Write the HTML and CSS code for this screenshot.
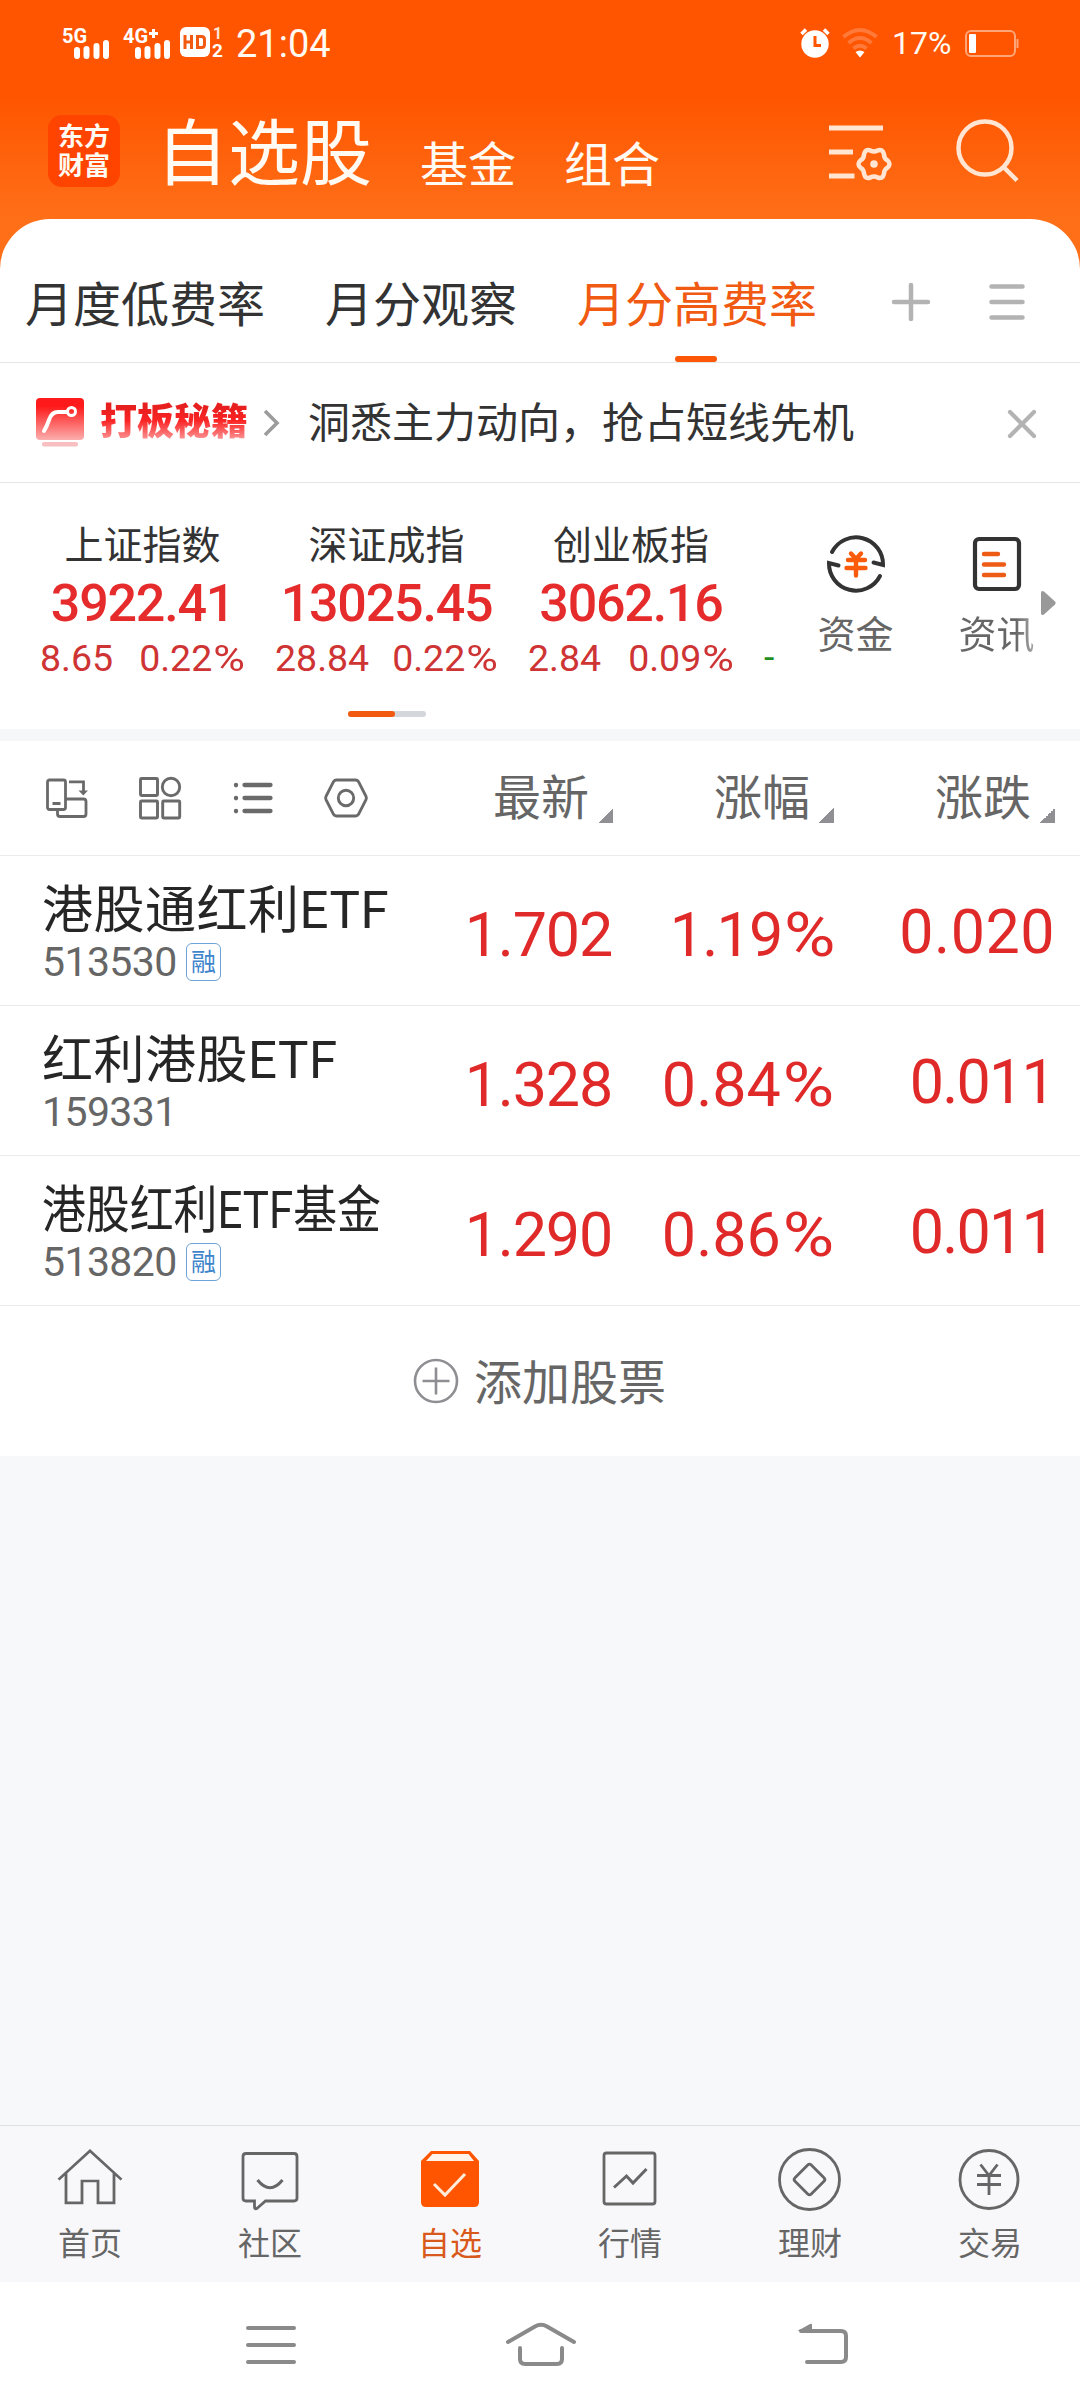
FILE: index.html
```html
<!DOCTYPE html>
<html lang="zh-CN">
<head>
<meta charset="utf-8">
<title>自选股</title>
<link rel="stylesheet" href="styles.css">
</head>
<body>
<div class="screen">
  <header class="top">
    <div class="status">
      <svg class="signal" width="49" height="34" viewBox="0 0 49 34"><text x="0" y="17" class="net">5G</text><path class="bars" d="M15 24v6M24.500 23v7M34.500 20v10M44 17v13"/></svg>
      <svg class="signal-4g" width="49" height="34" viewBox="0 0 49 34"><text x="0" y="17" class="net">4G</text><path d="M26 7.500h9M30.500 3v9" stroke="#fff" stroke-width="3"/><path class="bars" d="M15 24v6M24.500 23v7M34.500 20v10M44 17v13"/></svg>
      <svg class="hd" width="44" height="34" viewBox="0 0 44 34"><rect x="0" y="2" width="30" height="30" rx="6" fill="#fff"/><path d="M5 10v14M11.500 10v14M5 17h6.500M17.500 11.500v11h4q3 0 3-3v-5q0-3-3-3z" fill="none" stroke="#f25a12" stroke-width="3"/><text x="33" y="14" class="sim">1</text><text x="32" y="32" class="sim sim-on">2</text></svg>
      <span class="clock">21:04</span>
      <svg class="alarm" width="30" height="30" viewBox="0 0 30 30"><circle cx="15" cy="16" r="13.700" fill="#fff"/><path d="M1.500 6l4.500-4.500M28.500 6L24 1.500" stroke="#fff" stroke-width="3.500"/><path d="M15 8v9.500h6" fill="none" stroke="#ff5500" stroke-width="3"/></svg>
      <svg class="wifi" width="36" height="30" viewBox="0 0 36 30"><g fill="none" stroke="#ff7a3a" stroke-width="4"><path d="M1.500 9q16.500-14 33 0"/><path d="M6.500 15q11.500-10 23 0"/><path d="M11.500 20.500q6.500-5.500 13 0"/></g><path d="M13.500 24q4.500-3 9 0L18 29.500z" fill="#fff"/></svg>
      <span class="percent">17%</span>
      <svg class="battery" width="54" height="28" viewBox="0 0 54 28"><rect x="1" y="1" width="49" height="25" rx="5" fill="none" stroke="#ffa679" stroke-width="2"/><rect x="4" y="4" width="7" height="19" rx="1" fill="#fff"/><path d="M52.500 9v9" stroke="#ffa679" stroke-width="2"/></svg>
    </div>
    <div class="titlebar">
      <div class="logo"><span>东方</span><span>财富</span></div>
      <h1 class="title">自选股</h1>
      <span class="section">基金</span>
      <span class="section">组合</span>
      <svg class="manage" width="64" height="58" viewBox="0 0 64 58"><g fill="none" stroke="#ffe5d2" stroke-width="5"><path d="M0 4h54M0 28h24M0 52h25.500"/><path transform="translate(45 40)" stroke-width="4.500" d="M13.500-3.600Q17.500 0 13.500 3.600Q9.960 5.750 9.900 9.900Q8.750 15.150 3.600 13.500Q0 11.500-3.600 13.500Q-8.750 15.150-9.900 9.900Q-9.960 5.750-13.500 3.600Q-17.500 0-13.500-3.600Q-9.960-5.750-9.900-9.900Q-8.750-15.150-3.600-13.500Q0-11.500 3.600-13.500Q8.750-15.150 9.900-9.900Q9.960-5.750 13.500-3.600Z"/></g><circle cx="45" cy="40" r="3.800" fill="#ffe5d2"/></svg>
      <svg class="search" width="64" height="64" viewBox="0 0 64 64"><g fill="none" stroke="#ffe5d2" stroke-width="4.500"><circle cx="29" cy="29" r="26.500"/><path d="M47.500 48L61 61.500"/></g></svg>
    </div>
  </header>

  <main class="sheet">
    <nav class="groups">
      <span class="group">月度低费率</span>
      <span class="group">月分观察</span>
      <span class="group group-active">月分高费率</span>
      <svg class="add-group" width="40" height="40" viewBox="0 0 40 40"><path d="M3 20h34M20 3v34" stroke="#b3b3b3" stroke-width="4.500" stroke-linecap="round"/></svg>
      <svg class="list-groups" width="36" height="40" viewBox="0 0 36 40"><path d="M2.500 4.500h31M2.500 20h31M2.500 35.500h31" stroke="#b3b3b3" stroke-width="4.500" stroke-linecap="round"/></svg>
    </nav>

    <section class="promo">
      <svg class="promo-icon" width="48" height="50" viewBox="0 0 48 50"><defs><linearGradient id="promo" x1="0" y1="0" x2="0" y2="1"><stop offset=".2" stop-color="#fe1a1a"/><stop offset="1" stop-color="#fcaeae"/></linearGradient></defs><rect x="0" y="0" width="48" height="42" rx="4" fill="url(#promo)"/><path d="M8 33Q11 28 13 22Q15.500 14 22 14h9" fill="none" stroke="#fff" stroke-width="4" stroke-linecap="round"/><circle cx="35.500" cy="13.500" r="4" fill="none" stroke="#fff" stroke-width="3"/><rect x="6" y="44" width="36" height="4.500" rx="2" fill="#f8bfc0"/></svg>
      <span class="promo-brand">打板秘籍</span>
      <svg class="promo-arrow" width="16" height="30" viewBox="0 0 16 30"><path d="M2 3l12 12L2 27" fill="none" stroke="#9c9c9c" stroke-width="3.600"/></svg>
      <span class="promo-text">洞悉主力动向，抢占短线先机</span>
      <svg class="close" width="30" height="30" viewBox="0 0 30 30"><path d="M3 3l24 24M27 3L3 27" stroke="#b3b3b3" stroke-width="4.200" stroke-linecap="round"/></svg>
    </section>

    <section class="market">
      <div class="market-row">
        <div class="indices">
          <div class="index"><span class="index-name">上证指数</span><b class="index-value">3922.41</b><span class="change"><i>8.65</i><i>0.22<span class="pct">%</span></i></span></div>
          <div class="index"><span class="index-name">深证成指</span><b class="index-value">13025.45</b><span class="change"><i>28.84</i><i>0.22<span class="pct">%</span></i></span></div>
          <div class="index"><span class="index-name">创业板指</span><b class="index-value">3062.16</b><span class="change"><i>2.84</i><i>0.09<span class="pct">%</span></i></span></div>
          <span class="next-index">-</span>
        </div>
        <div class="shortcuts">
          <div class="shortcut">
            <svg width="60" height="60" viewBox="0 0 60 60"><g fill="none" stroke="#333" stroke-width="4"><path stroke-linecap="round" d="M6 18A27 27 0 0 1 57 31L47.500 28.500"/><path stroke-linecap="round" d="M54 42A27 27 0 0 1 3 29L12.500 31.500"/></g><path d="M25 19.500l5 5.500 5-5.500M22 26h17M20.500 34h19M30 26v15.500" fill="none" stroke="#f95b0b" stroke-width="4.400" stroke-linecap="round"/></svg>
            <span>资金</span>
          </div>
          <div class="shortcut shortcut-fade">
            <svg width="60" height="60" viewBox="0 0 60 60"><rect x="8" y="5" width="44" height="50" rx="4" fill="none" stroke="#333" stroke-width="4.200"/><path d="M17 20h14M17 30.500h20M17 41h20" stroke="#ee5b15" stroke-width="4.400" stroke-linecap="round"/></svg>
            <span>资讯</span>
          </div>
        </div>
        <svg class="more" width="15" height="26" viewBox="0 0 15 26"><path d="M0 3Q0 0 3 1.500L14 11.500Q15.500 13 14 14.500L3 24.500Q0 26 0 23z" fill="#999"/></svg>
      </div>
      <div class="pager"><span></span></div>
    </section>

    <section class="table">
      <div class="table-head">
        <div class="tools">
          <svg width="44" height="44" viewBox="0 0 44 44"><g fill="none" stroke="#6a6a6a" stroke-width="2.800"><rect x="2.500" y="4" width="18" height="29.500" rx="2"/><path d="M7.500 27.500h8M12.500 34v4q0 2.500 2.500 2.500h23.500q2.500 0 2.500-2.500V25.500q0-2.500-2.500-2.500H21M24 5.800h14.500V15"/></g><path d="M33.500 14.500h9.500l-4.700 5z" fill="#6a6a6a"/></svg>
          <svg width="44" height="44" viewBox="0 0 44 44"><g fill="none" stroke="#6a6a6a" stroke-width="2.900"><rect x="2.500" y="2.500" width="17" height="17" rx="1"/><circle cx="33" cy="11" r="8.700"/><rect x="2.500" y="25" width="17" height="17" rx="1"/><rect x="24.700" y="25" width="17" height="17" rx="1"/></g></svg>
          <svg width="44" height="44" viewBox="0 0 44 44"><path d="M13.500 9h26M13.500 22h26M13.500 35h26M5 8.800v.5M5 21.800v.5M5 34.800v.5" stroke="#6a6a6a" stroke-width="4.300" stroke-linecap="round"/></svg>
          <svg width="44" height="44" viewBox="0 0 44 44"><g fill="none" stroke="#6a6a6a" stroke-width="2.900"><path d="M12.500 4h19q2 0 3 1.700L42 20.300q.8 1.700 0 3.400L34.500 38.300q-1 1.700-3 1.700h-19q-2 0-3-1.700L2 23.700q-.8-1.700 0-3.400L9.500 5.700q1-1.700 3-1.700z"/><circle cx="22" cy="22" r="7.700"/></g></svg>
        </div>
        <span class="sort">最新</span>
        <span class="sort">涨幅</span>
        <span class="sort">涨跌</span>
      </div>
      <div class="row">
        <div class="stock"><span class="name">港股通红利ETF</span><span class="code">513530<em>融</em></span></div>
        <span class="num price">1.702</span><span class="num tight">1.19<span class="pct">%</span></span><span class="num diff">0.020</span>
      </div>
      <div class="row">
        <div class="stock"><span class="name">红利港股ETF</span><span class="code">159331</span></div>
        <span class="num price">1.328</span><span class="num">0.84<span class="pct">%</span></span><span class="num diff tight">0.011</span>
      </div>
      <div class="row">
        <div class="stock"><span class="name name-condensed">港股红利ETF基金</span><span class="code">513820<em>融</em></span></div>
        <span class="num price">1.290</span><span class="num">0.86<span class="pct">%</span></span><span class="num diff tight">0.011</span>
      </div>
      <div class="add-stock">
        <svg width="46" height="46" viewBox="0 0 46 46"><g fill="none" stroke="#8e8e93" stroke-width="2.600"><circle cx="23" cy="23" r="21"/><path d="M9.500 23h27M23 9.500v27"/></g></svg>
        <span>添加股票</span>
      </div>
    </section>
  </main>

  <nav class="tabbar">
    <div class="tab"><svg width="64" height="64" viewBox="0 0 64 64"><path d="M0.500 26.500L32 -4.500L63.500 26.500M8 20v31.500h16V28h16v23.500h16V20" transform="translate(0 8) scale(1 .93)" fill="none" stroke="#666" stroke-width="2.800"/></svg><span>首页</span></div>
    <div class="tab"><svg width="64" height="64" viewBox="0 0 64 64"><path d="M8 6.500h48q3 0 3 3V51q0 3-3 3H27.500l-8 7q-3 2-3-1V54H8q-3 0-3-3V9.500q0-3 3-3z" fill="none" stroke="#666" stroke-width="2.800"/><path d="M19.500 33Q32 48.500 44.500 33" fill="none" stroke="#666" stroke-width="3"/></svg><span>社区</span></div>
    <div class="tab tab-active"><svg width="64" height="64" viewBox="0 0 64 64"><path d="M3 14L13 4h39l9 10v41q0 5-5 5H8q-5 0-5-5z" fill="#ff5500"/><path d="M8 14l6.500-7h36L56 14z" fill="#fff3ec"/><path d="M16 37l11 11 20-21" fill="none" stroke="#ffecdc" stroke-width="3"/></svg><span>自选</span></div>
    <div class="tab"><svg width="64" height="64" viewBox="0 0 64 64"><rect x="6" y="6" width="51" height="51" rx="2.500" fill="none" stroke="#666" stroke-width="2.800"/><path d="M16 40.500L28.500 29l6.500 7 13.500-14" fill="none" stroke="#666" stroke-width="3"/></svg><span>行情</span></div>
    <div class="tab"><svg width="64" height="64" viewBox="0 0 64 64"><circle cx="31.500" cy="32.500" r="30" fill="none" stroke="#666" stroke-width="2.800"/><rect x="20" y="21" width="23" height="23" rx="2.500" transform="rotate(45 31.500 32.500)" fill="none" stroke="#666" stroke-width="2.800"/></svg><span>理财</span></div>
    <div class="tab"><svg width="64" height="64" viewBox="0 0 64 64"><g fill="none" stroke="#666" stroke-width="2.800"><circle cx="31" cy="32.500" r="29"/><path d="M22.500 17.500l8.500 11 8.500-11M19 28.500h24M19 37.500h24M31 28.500V48"/></g></svg><span>交易</span></div>
  </nav>

  <nav class="sysnav">
    <svg width="70" height="48" viewBox="0 0 70 48"><path d="M12 8h46M12 25h46M12 42h46" stroke="#8a8a8a" stroke-width="4" stroke-linecap="round"/></svg>
    <svg width="71" height="48" viewBox="0 0 71 48"><g fill="none" stroke="#8a8a8a" stroke-width="4" stroke-linecap="round"><path d="M2 22L29 6.500Q35 3 41 6.500L68 22"/><path d="M14 28v11q0 5 5 5h32q5 0 5-5V28"/></g></svg>
    <svg class="back" width="70" height="48" viewBox="0 0 70 48"><path d="M12 11h40q5 0 5 5v21q0 5-5 5H18" fill="none" stroke="#8a8a8a" stroke-width="4" stroke-linecap="round"/><path d="M8.500 11L21 4q2-1 2 1v6z" fill="#8a8a8a"/></svg>
  </nav>
</div>
</body>
</html>
```

FILE: styles.css
```css
* { box-sizing: border-box; }

body {
  margin: 0;
  font-family: Roboto, "Noto Sans CJK SC", sans-serif;
  color: #333;
}

svg { display: block; flex: none; overflow: visible; }
i, em { font-style: normal; }

.screen {
  width: 1080px;
  height: 2408px;
  display: flex;
  flex-direction: column;
  background: linear-gradient(#ff5500 95px, #ff6f18 219px, #ff6f18 280px, #f6f8fa 280px);
  overflow: hidden;
  white-space: nowrap;
}

/* wide percent sign that follows a figure */
.pct {
  display: inline-block;
  padding-left: .14em;
  transform: scaleX(1.15);
  transform-origin: right;
}

/* status bar and title */
.top { height: 219px; flex: none; color: #fffaf2; }

.status {
  display: flex;
  align-items: center;
  height: 86px;
  padding-left: 62px;
}
.net { font: 700 20px Roboto, sans-serif; fill: #fff; }
.bars { stroke: #fff; stroke-width: 6; stroke-linecap: round; }
.sim { font: 700 16px Roboto, sans-serif; fill: #ffe6d6; }
.sim-on { font-size: 19px; fill: #fff; }
.signal-4g { margin-left: 12px; }
.hd { margin-left: 8px; margin-top: -2px; }
.clock { width: 96px; margin-left: 12px; margin-top: 2px; font-size: 38px; line-height: 44px; }
.alarm { margin-left: 468px; }
.wifi { margin-left: 12px; }
.percent { width: 62px; margin-left: 14px; font-size: 32px; line-height: 40px; }
.battery { margin-left: 11px; margin-top: 2px; }

.titlebar {
  display: flex;
  align-items: center;
  height: 133px;
  padding-left: 48px;
}
.logo {
  width: 72px;
  height: 72px;
  margin-top: -3px;
  padding-top: 8px;
  border-radius: 14px;
  background: #ff4400;
  text-align: center;
  font-size: 26px;
  font-weight: 700;
}
.logo span { display: block; line-height: 29px; }
.title { margin: 4px 0 0 36px; font-size: 72px; font-weight: 400; line-height: 90px; }
.section { margin: 26px 0 0 48px; font-size: 48px; line-height: 60px; }
.manage { margin-left: 169px; }
.search { margin-left: 63px; margin-top: -4px; }

/* white sheet */
.sheet {
  flex: none;
  height: 1237px;
  background: #fff;
  border-radius: 50px 50px 0 0;
}

.groups {
  display: flex;
  align-items: center;
  height: 144px;
  padding: 30px 0 0 25px;
  border-bottom: 1px solid #e4e4e4;
}
.group {
  position: relative;
  margin-right: 60px;
  font-size: 48px;
  line-height: 60px;
}
.group-active { color: #f05a12; margin-right: 74px; }
.group-active::after {
  content: "";
  position: absolute;
  left: 98px;
  top: 80px;
  width: 42px;
  height: 6px;
  border-radius: 3px;
  background: #fb5707;
}
.add-group { margin-top: -7px; }
.list-groups { margin: -7px 0 0 58px; }

.promo {
  display: flex;
  align-items: center;
  height: 120px;
  padding-left: 36px;
  border-bottom: 1px solid #e4e4e4;
}
.promo-brand {
  margin-left: 16px;
  font-size: 37px;
  font-weight: 900;
  line-height: 50px;
  color: transparent;
  background: linear-gradient(#e81f1f 20%, #fb2424 45%, #fc9a9a 85%);
  -webkit-background-clip: text;
  background-clip: text;
}
.promo-arrow { margin-left: 15px; }
.promo-text { margin-left: 29px; margin-top: 2px; font-size: 42px; line-height: 50px; }
.close { margin-left: 153px; margin-top: 2px; }

.market { height: 246px; }
.market-row { position: relative; display: flex; height: 228px; }
.indices {
  display: grid;
  grid-template-columns: 205px 223px 206px 20px;
  column-gap: 30px;
  width: 785px;
  padding: 38px 0 0 40px;
}
.index { display: flex; flex-direction: column; align-items: center; }
.index-name { font-size: 39px; line-height: 50px; }
.index-value {
  font-size: 52px;
  font-weight: 500;
  line-height: 66px;
  letter-spacing: -1.200px;
  color: #e52b2b;
}
.change {
  display: flex;
  justify-content: space-between;
  align-self: stretch;
  font-size: 37.500px;
  line-height: 42px;
  color: #cf3434;
}
.next-index { padding-top: 115px; font-size: 37.500px; line-height: 42px; color: #1f8f1f; }

.shortcuts { display: flex; }
.shortcut {
  display: flex;
  flex-direction: column;
  align-items: center;
  width: 141px;
  padding-top: 51px;
  font-size: 38px;
  color: #666;
}
.shortcut span { margin-top: 19px; line-height: 44px; }
.shortcut-fade span {
  color: transparent;
  background: linear-gradient(90deg, #666 75%, #aaa);
  -webkit-background-clip: text;
  background-clip: text;
}
.more { position: absolute; left: 1041px; top: 107px; }

.pager {
  width: 78px;
  height: 6px;
  margin-left: 348px;
  border-radius: 3px;
  background: #d3d6da;
}
.pager span {
  display: block;
  width: 47px;
  height: 6px;
  border-radius: 3px;
  background: #f25a12;
}

/* watch list */
.table { border-top: 12px solid #f6f7f9; }
.table-head, .row {
  display: grid;
  grid-template-columns: 1fr 221px 221px 221px;
  padding: 0 25px 0 42px;
  border-bottom: 1px solid #ebebeb;
}
.table-head { height: 115px; align-items: center; }
.tools { display: flex; gap: 49px; width: 330px; padding-left: 3px; }
.sort {
  display: flex;
  justify-content: flex-end;
  font-size: 48px;
  line-height: 60px;
  margin-top: 2px;
  color: #666;
}
.sort::after {
  content: "";
  width: 15px;
  height: 15px;
  margin: 39px 0 0 9px;
  background: linear-gradient(135deg, transparent 50%, #8f8f94 50%);
}

.row { height: 150px; }
.stock { display: flex; flex-direction: column; width: 350px; padding-top: 25px; }
.name { font-size: 51px; line-height: 60px; letter-spacing: .5px; color: #262626; }
.name-condensed { width: max-content; letter-spacing: 0; transform: scaleX(.86); transform-origin: left; }
.code {
  display: flex;
  align-items: center;
  font-size: 41px;
  line-height: 42px;
  letter-spacing: -.6px;
  color: #666;
}
.code em {
  width: 35px;
  height: 38px;
  margin-left: 9px;
  border: 1.500px solid #6ea3d8;
  border-radius: 6px;
  text-align: center;
  font-size: 25px;
  line-height: 37px;
  color: #3f85cc;
}
.num {
  padding-top: 43px;
  text-align: right;
  font-size: 61px;
  line-height: 72px;
  color: #e02a2a;
}
.price { letter-spacing: -1.200px; padding-right: 1px; }
.diff { padding-top: 40px; letter-spacing: .5px; }
.tight { letter-spacing: -1.800px; padding-right: 1px; }

.add-stock {
  display: flex;
  align-items: center;
  gap: 15px;
  height: 150px;
  padding-left: 413px;
  font-size: 48px;
  color: #666;
}
.add-stock span { margin-top: 6px; line-height: 60px; }

/* bottom bars */
.tabbar {
  display: flex;
  flex: none;
  height: 157px;
  margin-top: auto;
  padding-top: 21px;
  border-top: 1px solid #dfe2e5;
  background: #f8f8fa;
}
.tab {
  display: flex;
  flex-direction: column;
  align-items: center;
  width: 180px;
  font-size: 32px;
  color: #666;
}
.tab span { margin-top: 13px; line-height: 40px; }
.tab-active { color: #d9581c; }

.sysnav {
  display: flex;
  flex: none;
  gap: 200px;
  height: 126px;
  padding: 38px 0 0 236px;
  background: #fff;
}
.back { margin-left: 12px; }
```
